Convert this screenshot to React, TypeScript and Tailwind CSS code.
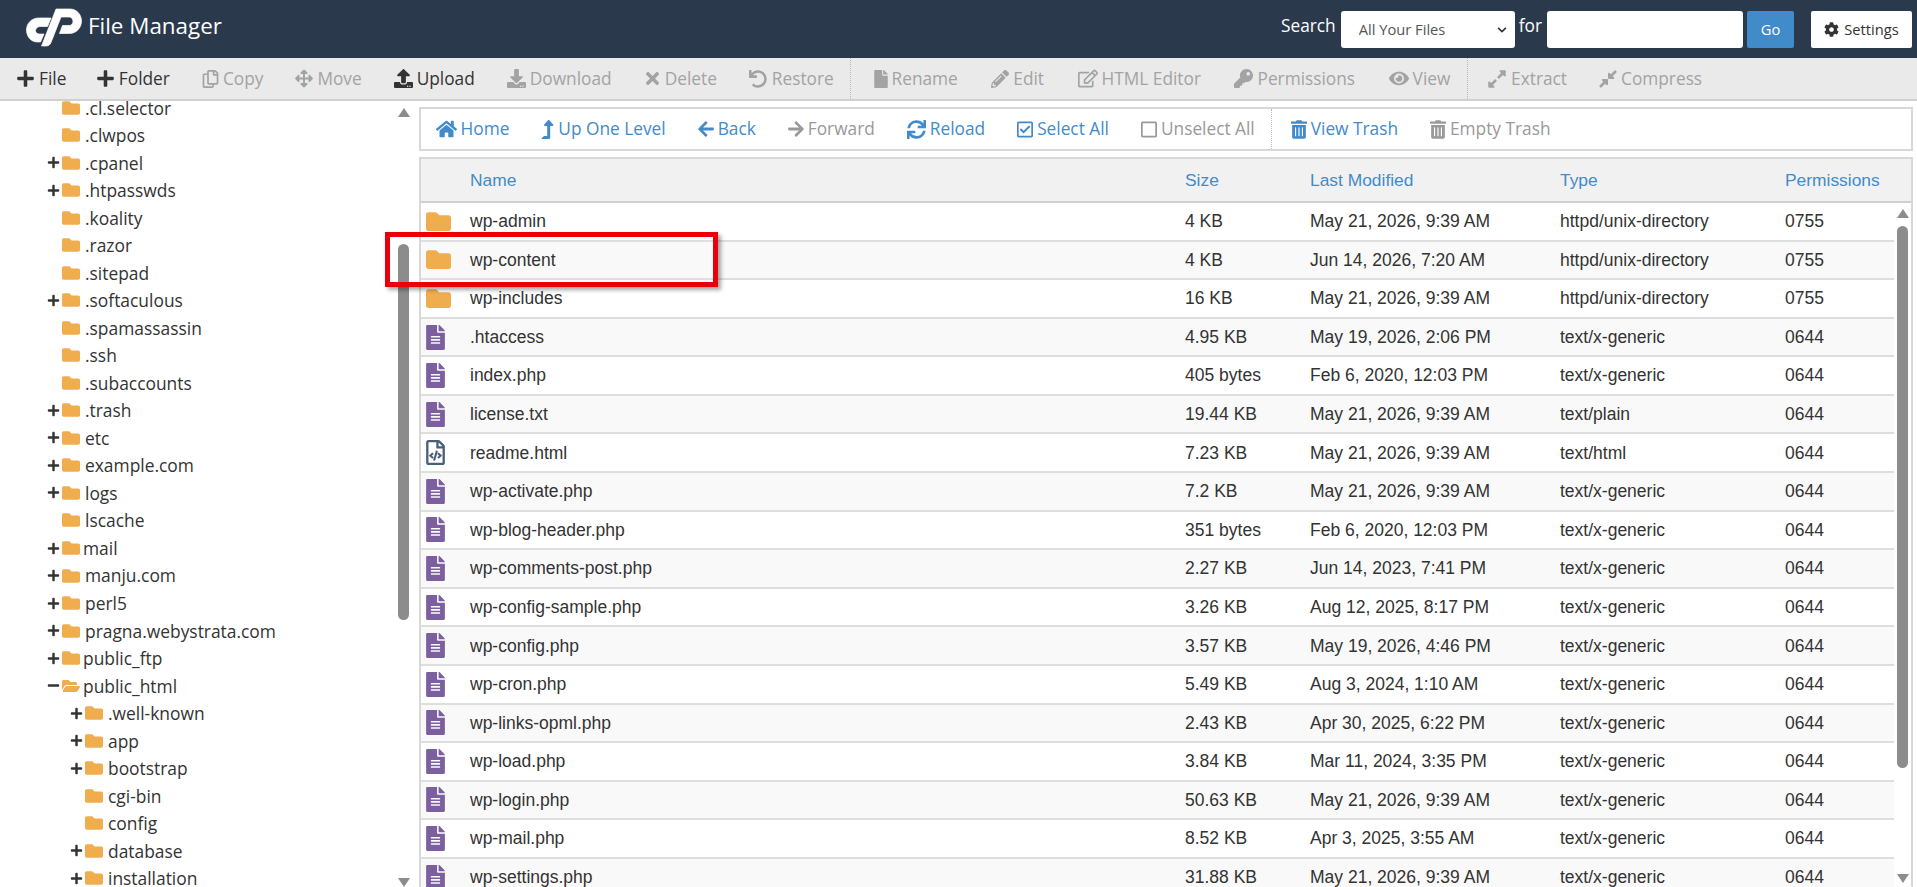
import React from "react";
import {
  FaPlus, FaMinus, FaRegCopy, FaArrowsAlt, FaUpload, FaDownload, FaTimes, FaUndo, FaFile, FaPencilAlt,
  FaRegEdit, FaKey, FaEye, FaExpandAlt, FaCompressAlt, FaHome, FaLevelUpAlt, FaArrowLeft, FaArrowRight,
  FaSync, FaRegCheckSquare, FaRegSquare, FaTrashAlt, FaFolder, FaFolderOpen, FaFileAlt, FaRegFileCode, FaCog,
  FaChevronDown,
} from "react-icons/fa";

const open = { fontFamily: '"Open Sans", sans-serif' };
const arial = { fontFamily: '"Liberation Sans", Arial, sans-serif' };

type Tool = { label: string; Icon: React.ComponentType<{ size?: number }>; size: number; on?: boolean; w: number };

const toolsA: Tool[] = [
  { label: "File", Icon: FaPlus, size: 19, on: true, w: 19 },
  { label: "Folder", Icon: FaPlus, size: 19, on: true, w: 19 },
  { label: "Copy", Icon: FaRegCopy, size: 18, w: 17 },
  { label: "Move", Icon: FaArrowsAlt, size: 19, w: 18 },
  { label: "Upload", Icon: FaUpload, size: 19, on: true, w: 19 },
  { label: "Download", Icon: FaDownload, size: 19, w: 19 },
  { label: "Delete", Icon: FaTimes, size: 19, w: 17 },
  { label: "Restore", Icon: FaUndo, size: 18, w: 19 },
];
const toolsB: Tool[] = [
  { label: "Rename", Icon: FaFile, size: 18, w: 14 },
  { label: "Edit", Icon: FaPencilAlt, size: 18, w: 18 },
  { label: "HTML Editor", Icon: FaRegEdit, size: 21, w: 20 },
  { label: "Permissions", Icon: FaKey, size: 19, w: 19 },
  { label: "View", Icon: FaEye, size: 21, w: 20 },
];
const toolsC: Tool[] = [
  { label: "Extract", Icon: FaExpandAlt, size: 20, w: 20 },
  { label: "Compress", Icon: FaCompressAlt, size: 20, w: 18 },
];
const navA: Tool[] = [
  { label: "Home", Icon: FaHome, size: 22, on: true, w: 21 },
  { label: "Up One Level", Icon: FaLevelUpAlt, size: 19, on: true, w: 13 },
  { label: "Back", Icon: FaArrowLeft, size: 18, on: true, w: 16 },
  { label: "Forward", Icon: FaArrowRight, size: 18, w: 16 },
  { label: "Reload", Icon: FaSync, size: 19, on: true, w: 19 },
  { label: "Select All", Icon: FaRegCheckSquare, size: 19, on: true, w: 16 },
  { label: "Unselect All", Icon: FaRegSquare, size: 19, w: 16 },
];
const navB: Tool[] = [
  { label: "View Trash", Icon: FaTrashAlt, size: 19, on: true, w: 16 },
  { label: "Empty Trash", Icon: FaTrashAlt, size: 19, w: 16 },
];

type Node = { name: string; level: 1 | 2; mark?: "plus" | "minus"; tight?: boolean };
const tree: Node[] = [
  { name: ".cl.selector", level: 1 },
  { name: ".clwpos", level: 1 },
  { name: ".cpanel", level: 1, mark: "plus" },
  { name: ".htpasswds", level: 1, mark: "plus" },
  { name: ".koality", level: 1 },
  { name: ".razor", level: 1 },
  { name: ".sitepad", level: 1 },
  { name: ".softaculous", level: 1, mark: "plus" },
  { name: ".spamassassin", level: 1 },
  { name: ".ssh", level: 1 },
  { name: ".subaccounts", level: 1 },
  { name: ".trash", level: 1, mark: "plus" },
  { name: "etc", level: 1, mark: "plus" },
  { name: "example.com", level: 1, mark: "plus" },
  { name: "logs", level: 1, mark: "plus" },
  { name: "lscache", level: 1 },
  { name: "mail", level: 1, mark: "plus", tight: true },
  { name: "manju.com", level: 1, mark: "plus" },
  { name: "perl5", level: 1, mark: "plus" },
  { name: "pragna.webystrata.com", level: 1, mark: "plus" },
  { name: "public_ftp", level: 1, mark: "plus", tight: true },
  { name: "public_html", level: 1, mark: "minus", tight: true },
  { name: ".well-known", level: 2, mark: "plus" },
  { name: "app", level: 2, mark: "plus" },
  { name: "bootstrap", level: 2, mark: "plus" },
  { name: "cgi-bin", level: 2 },
  { name: "config", level: 2 },
  { name: "database", level: 2, mark: "plus" },
  { name: "installation", level: 2, mark: "plus" },
];

const M = "May 21, 2026, 9:39 AM";
const G = "text/x-generic";
const D = "httpd/unix-directory";
const files: [string, string, string, string, string, "dir" | "file" | "code"][] = [
  ["wp-admin", "4 KB", M, D, "0755", "dir"],
  ["wp-content", "4 KB", "Jun 14, 2026, 7:20 AM", D, "0755", "dir"],
  ["wp-includes", "16 KB", M, D, "0755", "dir"],
  [".htaccess", "4.95 KB", "May 19, 2026, 2:06 PM", G, "0644", "file"],
  ["index.php", "405 bytes", "Feb 6, 2020, 12:03 PM", G, "0644", "file"],
  ["license.txt", "19.44 KB", M, "text/plain", "0644", "file"],
  ["readme.html", "7.23 KB", M, "text/html", "0644", "code"],
  ["wp-activate.php", "7.2 KB", M, G, "0644", "file"],
  ["wp-blog-header.php", "351 bytes", "Feb 6, 2020, 12:03 PM", G, "0644", "file"],
  ["wp-comments-post.php", "2.27 KB", "Jun 14, 2023, 7:41 PM", G, "0644", "file"],
  ["wp-config-sample.php", "3.26 KB", "Aug 12, 2025, 8:17 PM", G, "0644", "file"],
  ["wp-config.php", "3.57 KB", "May 19, 2026, 4:46 PM", G, "0644", "file"],
  ["wp-cron.php", "5.49 KB", "Aug 3, 2024, 1:10 AM", G, "0644", "file"],
  ["wp-links-opml.php", "2.43 KB", "Apr 30, 2025, 6:22 PM", G, "0644", "file"],
  ["wp-load.php", "3.84 KB", "Mar 11, 2024, 3:35 PM", G, "0644", "file"],
  ["wp-login.php", "50.63 KB", M, G, "0644", "file"],
  ["wp-mail.php", "8.52 KB", "Apr 3, 2025, 3:55 AM", G, "0644", "file"],
  ["wp-settings.php", "31.88 KB", M, G, "0644", "file"],
];

function Logo() {
  return (
    <svg viewBox="0 0 56 38" className="mb-[4px] h-[38px] w-[56px] shrink-0 overflow-visible" fill="#ffffff" stroke="#ffffff" strokeWidth="0.7" strokeLinejoin="round">
      <path d="M25 10 L21.5 18.5 H14.5 C11 18.5 9.5 21 9.5 22.5 C9.5 24.5 11 26 13.5 26 H18 L14.5 34 H11.5 C4.5 34 0.5 28 0.5 22 C0.5 15 6 10 12.5 10 Z" />
      <path d="M30 1 H44 C51 1 55.5 7 55.5 13 C55.5 20 50 25.5 43.5 25.5 H33.5 L36.5 17.5 H43 C45.5 17.5 47 15.5 47 13.5 C47 11 45.5 9 43 9 H35 L25 34.5 C24 37 22.5 38 20 38 H15.5 Z" />
    </svg>
  );
}

function ToolItem({ t, nav, pad = "px-[16px]" }: { t: Tool; nav?: boolean; pad?: string }) {
  const color = nav
    ? t.on ? "text-[#428bca]" : "text-[#999999]"
    : t.on ? "text-[#333333]" : "text-[#a3a3a3]";
  return (
    <div className={`flex h-full items-center gap-[4px] text-[17.3px] ${pad} ${color}`}>
      <span className="flex items-center justify-center" style={{ width: t.w }}>
        <t.Icon size={t.size} />
      </span>
      <span className="whitespace-nowrap">{t.label}</span>
    </div>
  );
}

function Scrollbar({ top, height, before, after }: { top: number; height: number; before: string; after: string }) {
  return (
    <div className={`flex w-[13px] shrink-0 flex-col items-center ${before}`}>
      <div className="h-0 w-0 border-x-[6px] border-b-[9px] border-x-transparent border-b-[#8c8c8c]" />
      <div className="w-[11px] rounded-[6px] bg-[#8c8c8c]" style={{ marginTop: top, height }} />
      <div className={`h-0 w-0 border-x-[6px] border-t-[9px] border-x-transparent border-t-[#8c8c8c] ${after}`} />
    </div>
  );
}

export default function App() {
  return (
    <div className="relative flex h-[887px] w-[1917px] flex-col overflow-hidden bg-white text-[#333333]" style={open}>
      <header className="flex h-[58px] shrink-0 items-center bg-[#2a3a4c] pl-[26px] pr-[5px] text-white">
        <Logo />
        <span className="relative top-[-3px] ml-[6px] text-[22.4px]">File Manager</span>
        <div className="ml-auto flex items-center">
          <span className="relative top-[-3px] text-[17.3px]">Search</span>
          <div className="relative ml-[5px] h-[37px] w-[174px]">
            <select className="h-full w-full appearance-none rounded-[3px] bg-white pl-[18px] text-[14.7px] text-[#555555]" style={open}>
              <option>All Your Files</option>
            </select>
            <FaChevronDown size={10} className="pointer-events-none absolute right-[8px] top-[14px] text-[#333333]" />
          </div>
          <span className="relative top-[-3px] ml-[4px] text-[17.3px]">for</span>
          <input className="ml-[5px] h-[37px] w-[196px] rounded-[3px] bg-white" aria-label="search" />
          <button className="ml-[4px] h-[37px] w-[47px] rounded-[2px] bg-[#428bca] text-[14.7px] text-white">Go</button>
          <button className="ml-[17px] flex h-[37px] w-[101px] items-center justify-center gap-[5px] rounded-[2px] bg-white text-[14.7px] text-[#333333]">
            <FaCog size={15} />
            Settings
          </button>
        </div>
      </header>

      <div className="flex h-[43px] shrink-0 items-stretch border-b-2 border-[#d0d0d0] bg-[#eaeaea]">
        {toolsA.map((t, i) => <ToolItem key={i} t={t} pad={i === 0 ? "pl-[16px] pr-[13.5px]" : "px-[16px]"} />)}
        <div className="border-l border-dotted border-[#bbbbbb]" />
        <div className="flex items-stretch pl-[6px]">
          {toolsB.map((t, i) => <ToolItem key={i} t={t} pad="px-[16.75px]" />)}
        </div>
        <div className="border-l border-dotted border-[#bbbbbb]" />
        <div className="flex items-stretch pl-[3px]">
          {toolsC.map((t, i) => <ToolItem key={i} t={t} />)}
        </div>
      </div>

      <div className="flex min-h-0 flex-1">
        <aside className="flex w-[419px] shrink-0 overflow-hidden">
          <div className="mt-[-7px] w-[397px] shrink-0 text-[17.4px]">
            {tree.map((n, i) => (
              <div
                key={i}
                className={`flex h-[27.53px] items-center ${n.level === 1 ? "pl-[47px]" : "pl-[70px]"}`}
              >
                <span className="flex w-[15px] shrink-0 items-center text-[#333333]">
                  {n.mark === "plus" && <FaPlus size={13} />}
                  {n.mark === "minus" && <FaMinus size={13} />}
                </span>
                {n.mark === "minus" ? (
                  <FaFolderOpen size={18} className="shrink-0 text-[#f0ad4e]" />
                ) : (
                  <FaFolder size={18} className="shrink-0 text-[#f0ad4e]" />
                )}
                <span className={`whitespace-nowrap ${n.tight ? "ml-[3px]" : "ml-[5px]"}`}>{n.name}</span>
              </div>
            ))}
          </div>
          <Scrollbar top={127} height={378} before="pt-[7px]" after="mt-[258px]" />
        </aside>

        <main className="flex min-w-0 flex-1 flex-col gap-[6px] pr-[4px] pt-[6px]">
          <nav className="flex h-[44px] shrink-0 items-stretch border-2 border-[#d8d8d8]">
            {navA.map((t, i) => <ToolItem key={i} t={t} nav pad={i === 0 ? "pl-[14.5px] pr-[16px]" : "px-[16px]"} />)}
            <div className="border-l border-dotted border-[#bbbbbb]" />
            <div className="flex items-stretch pl-[3px]">
              {navB.map((t, i) => <ToolItem key={i} t={t} nav />)}
            </div>
          </nav>

          <section className="flex min-h-0 flex-1 flex-col border-x-2 border-t-2 border-[#d8d8d8]" style={arial}>
            <div className="grid h-[44px] shrink-0 grid-cols-[49px_715px_125px_250px_225px_1fr] items-center border-b-2 border-[#d0d0d0] bg-[#f1f1f1] text-[17.4px] text-[#428bca]">
              <span />
              <span>Name</span>
              <span>Size</span>
              <span>Last Modified</span>
              <span>Type</span>
              <span>Permissions</span>
            </div>
            <div className="flex min-h-0 flex-1 overflow-hidden">
              <div className="w-[1473px] shrink-0 text-[17.5px] text-[#333333]">
                {files.map((f, i) => (
                  <div
                    key={i}
                    className={`grid h-[38.58px] grid-cols-[49px_715px_125px_250px_225px_1fr] items-center border-b-2 border-[#dedede] ${i % 2 === 1 ? "bg-[#f9f9f9]" : "bg-white"}`}
                  >
                    <span className="flex items-center pl-[5px]">
                      {f[5] === "dir" && <FaFolder size={25} className="text-[#f0ad4e]" />}
                      {f[5] === "file" && <FaFileAlt className="h-[25px] w-[19px] text-[#7c5f9f]" />}
                      {f[5] === "code" && <FaRegFileCode className="h-[25px] w-[19px] text-[#4a5f7d]" />}
                    </span>
                    <span>{f[0]}</span>
                    <span>{f[1]}</span>
                    <span>{f[2]}</span>
                    <span>{f[3]}</span>
                    <span>{f[4]}</span>
                  </div>
                ))}
              </div>
              <div className="ml-[2px]">
                <Scrollbar top={8} height={542} before="pt-[6px]" after="mt-[106px]" />
              </div>
            </div>
          </section>
        </main>
      </div>

      <div className="pointer-events-none absolute left-[385px] top-[232px] h-[55px] w-[333px] border-[5px] border-[#e9000b] shadow-[3px_3px_4px_rgba(0,0,0,0.35)]" />
    </div>
  );
}
